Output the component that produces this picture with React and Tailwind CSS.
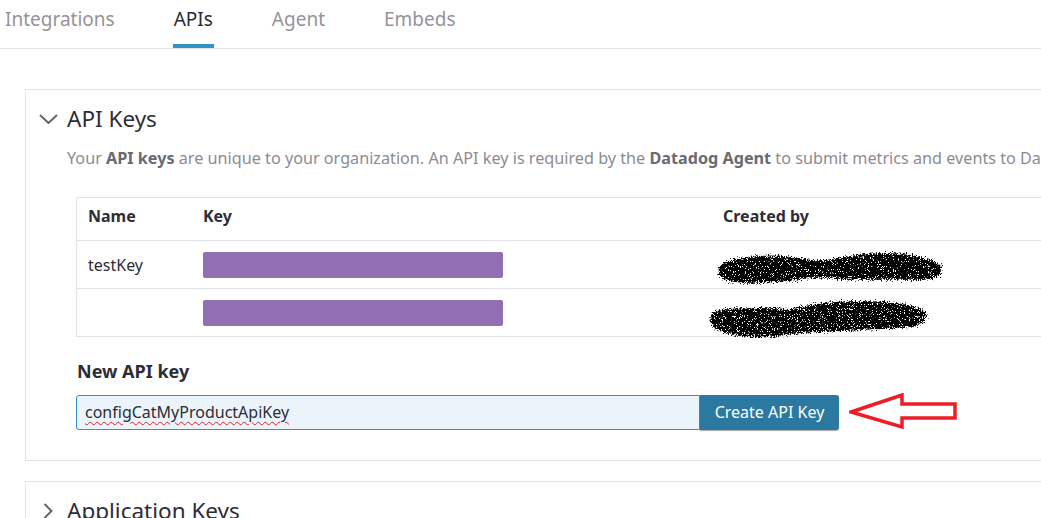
import React from "react";

function Scribble({ variant }) {
  const d1 =
    "M8 12 C30 4 60 2 90 8 C110 12 120 6 150 3 C180 0 210 4 226 14 C228 24 222 30 200 29 C170 28 140 30 115 27 C95 25 85 30 60 31 C35 32 12 33 6 26 C2 20 3 15 8 12 Z";
  const d2 =
    "M6 10 C30 6 55 7 80 8 C100 4 120 0 150 0 C180 0 205 3 215 10 C222 18 215 26 190 27 C165 28 140 30 110 31 C80 32 60 38 40 36 C20 34 5 30 2 22 C0 16 2 12 6 10 Z";
  return (
    <svg width="240" height="42" viewBox="-5 -5 240 42" className="block">
      <defs>
        <filter id={`f${variant}`} x="-10%" y="-30%" width="120%" height="160%">
          <feTurbulence type="fractalNoise" baseFrequency="0.8" numOctaves="2" seed={variant * 7} result="t" />
          <feDisplacementMap in="SourceGraphic" in2="t" scale="9" xChannelSelector="R" yChannelSelector="G" result="d" />
          <feTurbulence type="fractalNoise" baseFrequency="1.4" numOctaves="1" seed={variant * 3 + 1} result="n" />
          <feColorMatrix in="n" type="matrix" values="0 0 0 0 0  0 0 0 0 0  0 0 0 0 0  0 0 0 -14 9.5" result="m" />
          <feComposite in="d" in2="m" operator="in" />
        </filter>
      </defs>
      <path d={variant === 1 ? d1 : d2} fill="#000" filter={`url(#f${variant})`} />
    </svg>
  );
}

export default function App() {
  const font = { fontFamily: '"Noto Sans", "Open Sans", sans-serif' };
  return (
    <div className="w-[1041px] h-[518px] overflow-hidden bg-white" style={font}>
      {/* Tabs */}
      <div className="h-[49px] border-b border-[#e2e2e8] flex items-stretch pl-[5px] gap-[59px] text-[19px]">
        <div className="flex flex-col justify-between">
          <span className="text-[#959399] leading-[24px] pt-[7px]">Integrations</span>
        </div>
        <div className="flex flex-col justify-between">
          <span className="text-[#2b2b33] leading-[24px] pt-[7px]">APIs</span>
          <div className="h-[4px] bg-[#3592c8] -mx-[1px]" />
        </div>
        <div className="flex flex-col justify-between">
          <span className="text-[#959399] leading-[24px] pt-[7px]">Agent</span>
        </div>
        <div className="flex flex-col justify-between">
          <span className="text-[#959399] leading-[24px] pt-[7px]">Embeds</span>
        </div>
      </div>

      {/* API Keys card */}
      <div className="ml-[25px] mt-[40px] w-[1100px] border border-[#e2e2e8] pb-[29px]">
        <div className="flex items-center pt-[13px] h-[45px]">
          <svg width="19" height="10" viewBox="0 0 19 10" className="ml-[13px] mr-[9px]">
            <path d="M1 1 L9.5 9 L18 1" fill="none" stroke="#666" strokeWidth="2" />
          </svg>
          <span className="text-[22.5px] leading-[30px] text-[#2e2d35]">API Keys</span>
        </div>
        <p className="ml-[41px] mt-[12px] text-[16.2px] leading-[22px] text-[#8d8b92] whitespace-nowrap">
          Your <b className="text-[#6b6a70] font-bold">API keys</b> are unique to your organization. An API key is required by the{" "}
          <b className="text-[#6b6a70] font-bold">Datadog Agent</b> to submit metrics and events to Datadog.
        </p>

        <div className="ml-[50px] mt-[28px] border border-[#e2e2e8] text-[16px] text-[#2e2d35]">
          <div className="flex h-[43px] items-start pt-[6px] leading-[24px] font-bold border-b border-[#e2e2e8]">
            <div className="w-[126px] pl-[11px]">Name</div>
            <div className="w-[520px]">Key</div>
            <div>Created by</div>
          </div>
          <div className="flex h-[48px] items-center border-b border-[#e2e2e8]">
            <div className="w-[126px] pl-[11px]">testKey</div>
            <div className="w-[520px]">
              <div className="w-[300px] h-[26px] rounded-[2px] bg-[#926fb5]" />
            </div>
            <div className="-ml-[13px] mt-[4px]">
              <Scribble variant={1} />
            </div>
          </div>
          <div className="flex h-[47px] items-center">
            <div className="w-[126px] pl-[11px]"></div>
            <div className="w-[520px]">
              <div className="w-[300px] h-[26px] rounded-[2px] bg-[#926fb5]" />
            </div>
            <div className="-ml-[19px] mt-[8px]">
              <Scribble variant={2} />
            </div>
          </div>
        </div>

        <div className="ml-[51px] mt-[21px] text-[18px] font-bold leading-[26px] text-[#2e2d35]">New API key</div>
        <div className="ml-[50px] mt-[9px] flex items-center">
          <div className="w-[624px] h-[35px] bg-[#ebf4fa] border border-[#3a8cc4] rounded-l-[3px] flex items-center pl-[8px] text-[16px] text-[#2e2d35]">
            <span className="underline decoration-wavy decoration-[#e0201c] decoration-1 underline-offset-[3px]">
              configCatMyProductApiKey
            </span>
          </div>
          <button className="h-[35px] w-[139px] bg-[#2b79a1] text-white text-[16px] rounded-r-[3px] shadow-[0_1px_1px_rgba(0,0,0,0.35)]">
            Create API Key
          </button>
          <svg width="112" height="38" viewBox="0 0 112 38" className="ml-[10px]">
            <path
              d="M2 19 L53 2 L53 11 L106 11 L106 25 L53 25 L53 34 Z"
              fill="none"
              stroke="#ee1c24"
              strokeWidth="3.5"
              strokeLinejoin="miter"
            />
          </svg>
        </div>
      </div>

      {/* Application Keys card */}
      <div className="ml-[25px] mt-[20px] w-[1100px] border border-[#e2e2e8] h-[100px]">
        <div className="flex items-center pt-[14px]">
          <svg width="10" height="16" viewBox="0 0 10 16" className="ml-[17px] mr-[14px]">
            <path d="M1.5 1 L8.5 8 L1.5 15" fill="none" stroke="#666" strokeWidth="2" />
          </svg>
          <span className="text-[22.5px] leading-[30px] text-[#2e2d35]">Application Keys</span>
        </div>
      </div>
    </div>
  );
}
